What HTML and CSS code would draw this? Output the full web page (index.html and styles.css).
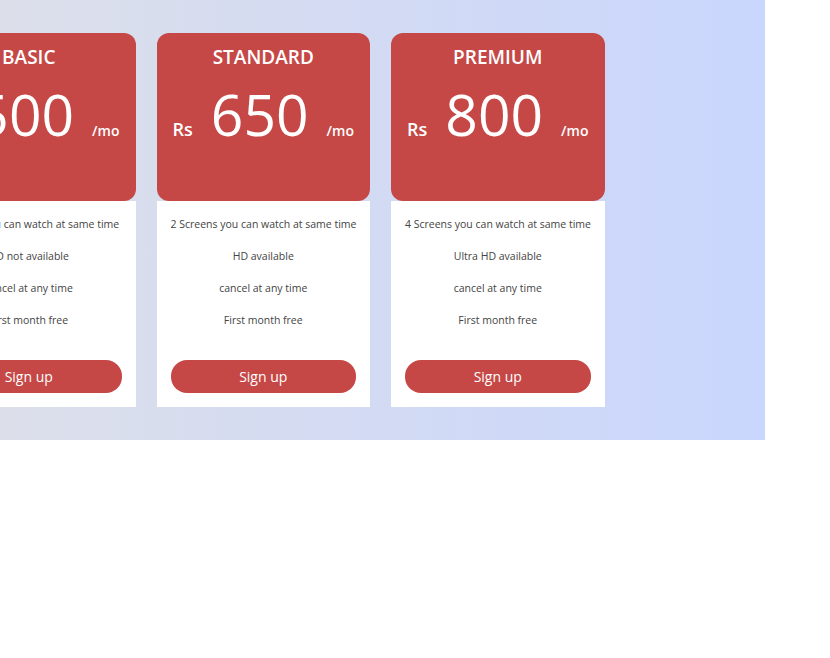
FILE: index.html
```html
<!DOCTYPE html>
<html lang="en">
<head>
  <meta charset="UTF-8" />
  <meta name="viewport" content="width=device-width, initial-scale=1.0"/>
  <title>Pricing</title>
  <link rel="stylesheet" href="styles.css">
</head>
<body>

  <section class="pricing">
    <div class="plans">

      <div class="plan">
        <div class="plan-head">
          <h2>BASIC</h2>
          <div class="price">
            <span class="currency">Rs</span>
            <span class="amount">500</span>
            <span class="period">/mo</span>
          </div>
        </div>
        <div class="plan-body">
          <ul>
            <li>1 Screen you can watch at same time</li>
            <li>HD not available</li>
            <li>cancel at any time</li>
            <li>First month free</li>
          </ul>
          <button>Sign up</button>
        </div>
      </div>

      <div class="plan">
        <div class="plan-head">
          <h2>STANDARD</h2>
          <div class="price">
            <span class="currency">Rs</span>
            <span class="amount">650</span>
            <span class="period">/mo</span>
          </div>
        </div>
        <div class="plan-body">
          <ul>
            <li>2 Screens you can watch at same time</li>
            <li>HD available</li>
            <li>cancel at any time</li>
            <li>First month free</li>
          </ul>
          <button>Sign up</button>
        </div>
      </div>

      <div class="plan">
        <div class="plan-head">
          <h2>PREMIUM</h2>
          <div class="price">
            <span class="currency">Rs</span>
            <span class="amount">800</span>
            <span class="period">/mo</span>
          </div>
        </div>
        <div class="plan-body">
          <ul>
            <li>4 Screens you can watch at same time</li>
            <li>Ultra HD available</li>
            <li>cancel at any time</li>
            <li>First month free</li>
          </ul>
          <button>Sign up</button>
        </div>
      </div>

    </div>
  </section>

</body>
</html>
```

FILE: styles.css
```css
body {
  margin: 0;
  background-color: white;
  font-family: "Open Sans", Arial, sans-serif;
}

.pricing {
  width: 765px;
  height: 440px;
  box-sizing: border-box;
  padding: 33px 0;
  overflow: hidden;
  background: linear-gradient(to right, #dcdfea, #c9d6fd);
}

.plans {
  display: flex;
  gap: 21px;
  margin-left: -78px;
}

.plan {
  width: 213.5px;
  flex-shrink: 0;
}

.plan-head {
  height: 168px;
  box-sizing: border-box;
  padding-top: 12px;
  background-color: #c64846;
  border-radius: 12px;
  color: white;
  text-align: center;
}

h2 {
  margin: 0;
  font-size: 19px;
  font-weight: 600;
  line-height: 24px;
}

.price {
  display: flex;
  justify-content: center;
  align-items: baseline;
  gap: 18px;
  margin-top: 14px;
}

.currency {
  font-size: 18px;
  font-weight: 600;
}

.amount {
  font-size: 57px;
  line-height: 62px;
}

.period {
  font-size: 14px;
  font-weight: 600;
}

.plan-body {
  background-color: white;
  padding: 15px 14px 14px;
  text-align: center;
}

ul {
  list-style: none;
  margin: 0;
  padding: 0;
  display: flex;
  flex-direction: column;
  gap: 16px;
}

li {
  font-size: 10.5px;
  line-height: 16px;
  color: #444;
  white-space: nowrap;
}

button {
  display: block;
  width: 100%;
  height: 33px;
  margin-top: 32px;
  border: none;
  border-radius: 16px;
  background-color: #c64846;
  color: white;
  font-family: "Open Sans", Arial, sans-serif;
  font-size: 14px;
  cursor: pointer;
}
```
